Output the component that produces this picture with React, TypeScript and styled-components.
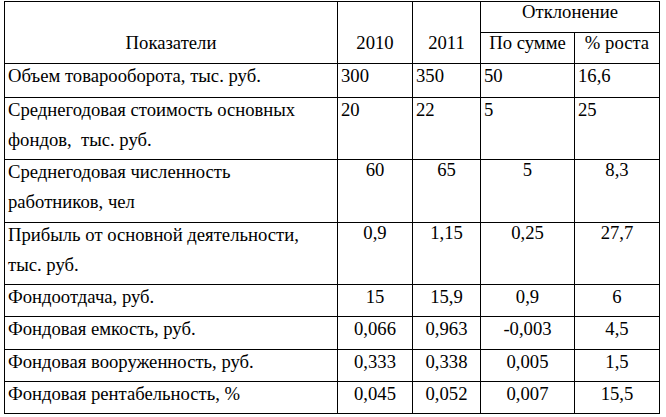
import React from "react";
import styled, { createGlobalStyle } from "styled-components";

const GlobalStyle = createGlobalStyle`
  html, body {
    margin: 0;
    padding: 0;
    background: #ffffff;
  }
  body {
    font-family: "Liberation Serif", "Times New Roman", serif;
    color: #000000;
  }
`;

const Table = styled.table`
  margin: 1px 0 0 4px;
  width: 656px;
  table-layout: fixed;
  border-collapse: collapse;
  font-family: "Liberation Serif", "Times New Roman", serif;
  font-size: 18.67px;
  color: #000;
`;

const HeadCell = styled.th<{ $height?: number }>`
  box-sizing: border-box;
  height: ${({ $height }) => ($height ? `${$height}px` : "auto")};
  padding: 0 2px 11px;
  border: 1px solid #000;
  font-weight: normal;
  line-height: 18px;
  text-align: center;
  vertical-align: bottom;
  white-space: nowrap;
`;

const Cell = styled.td<{ $height: number; $align?: "left" | "center" }>`
  box-sizing: border-box;
  height: ${({ $height }) => $height}px;
  padding: 0 3px 0 3px;
  border: 1px solid #000;
  line-height: 30px;
  text-align: ${({ $align }) => $align ?? "left"};
  vertical-align: top;
  white-space: pre-wrap;
`;

const CellText = styled.div<{ $shift?: number }>`
  margin-top: ${({ $shift }) => -($shift ?? 3)}px;
`;

type Row = {
  label: string;
  values: string[];
  height: number;
  align: "left" | "center";
};

const rows: Row[] = [
  { label: "Объем товарооборота, тыс. руб.", values: ["300", "350", "50", "16,6"], height: 34, align: "left" },
  { label: "Среднегодовая стоимость основных\nфондов,  тыс. руб.", values: ["20", "22", "5", "25"], height: 62, align: "left" },
  { label: "Среднегодовая численность\nработников, чел", values: ["60", "65", "5", "8,3"], height: 63, align: "center" },
  { label: "Прибыль от основной деятельности,\nтыс. руб.", values: ["0,9", "1,15", "0,25", "27,7"], height: 62, align: "center" },
  { label: "Фондоотдача, руб.", values: ["15", "15,9", "0,9", "6"], height: 32, align: "center" },
  { label: "Фондовая емкость, руб.", values: ["0,066", "0,963", "-0,003", "4,5"], height: 33, align: "center" },
  { label: "Фондовая вооруженность, руб.", values: ["0,333", "0,338", "0,005", "1,5"], height: 32, align: "center" },
  { label: "Фондовая рентабельность, %", values: ["0,045", "0,052", "0,007", "15,5"], height: 32, align: "center" },
];

export default function App() {
  return (
    <>
      <GlobalStyle />
      <Table>
        <colgroup>
          <col style={{ width: 333 }} />
          <col style={{ width: 75 }} />
          <col style={{ width: 68 }} />
          <col style={{ width: 94 }} />
          <col style={{ width: 85 }} />
        </colgroup>
        <thead>
          <tr>
            <HeadCell rowSpan={2}>Показатели</HeadCell>
            <HeadCell rowSpan={2}>2010</HeadCell>
            <HeadCell rowSpan={2}>2011</HeadCell>
            <HeadCell colSpan={2} $height={31}>Отклонение</HeadCell>
          </tr>
          <tr>
            <HeadCell $height={31}>По сумме</HeadCell>
            <HeadCell $height={31}>% роста</HeadCell>
          </tr>
        </thead>
        <tbody>
          {rows.map((row) => (
            <tr key={row.label}>
              <Cell $height={row.height}>
                <CellText>{row.label}</CellText>
              </Cell>
              {row.values.map((v, i) => (
                <Cell key={i} $height={row.height} $align={row.align}>
                  <CellText $shift={row.height > 50 && row.align === "center" ? 5 : 3}>{v}</CellText>
                </Cell>
              ))}
            </tr>
          ))}
        </tbody>
      </Table>
    </>
  );
}
